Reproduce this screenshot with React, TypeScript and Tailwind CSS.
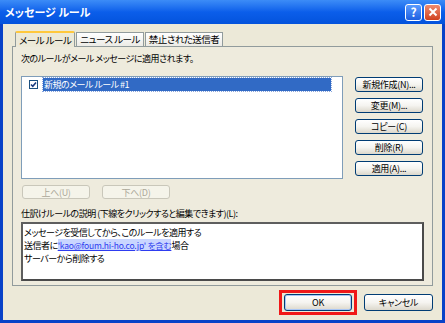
import React from 'react';

const jp = "font-['Noto_Sans_CJK_JP','Noto_Sans',sans-serif] [font-feature-settings:'palt']";

function XpButton({ label, disabled = false, className = '' }: { label: React.ReactNode; disabled?: boolean; className?: string }) {
  return (
    <div
      className={`flex items-center justify-center rounded-[3px] border text-[9px] leading-none tracking-[-0.3px] ${
        disabled
          ? 'border-[#C9C7BA] bg-[#F5F4EA] text-[#ACA899]'
          : 'border-[#003C74] bg-linear-to-b from-[#FFFFFF] via-[#F5F4F0] to-[#DCD8CC] text-black'
      } ${className}`}
    >
      {label}
    </div>
  );
}

function Tab({ label, active = false }: { label: string; active?: boolean }) {
  return active ? (
    <div className="relative z-10 -mb-px flex h-[16px] items-center rounded-t-[2px] border-x border-t-2 border-x-[#919B9C] border-t-[#FFC83C] bg-[#ECE9D8] px-[3px] text-[9.5px] tracking-[-0.5px]">
      {label}
    </div>
  ) : (
    <div className="mt-[2px] flex h-[14px] items-center border-x border-t border-[#919B9C] bg-linear-to-b from-[#FFFFFF] to-[#ECEBE6] px-[3px] text-[9.5px] tracking-[-0.5px]">
      {label}
    </div>
  );
}

function CheckBox() {
  return (
    <div className="flex h-[9px] w-[9px] items-center justify-center border border-[#1C5180] bg-white">
      <svg width="7" height="7" viewBox="0 0 7 7">
        <path d="M1 3.5 L2.8 5.3 L6 1.5" stroke="#1C3C80" strokeWidth="1.6" fill="none" />
      </svg>
    </div>
  );
}

export default function App() {
  const sideButtons = ['新規作成(N)...', '変更(M)...', 'コピー(C)', '削除(R)', '適用(A)...'];

  return (
    <div className={`flex h-[323px] w-[445px] flex-col overflow-hidden bg-[#0842C8] ${jp}`}>
      {/* title bar */}
      <div className="flex h-[24px] shrink-0 items-center justify-between bg-linear-to-b from-[#3C8CF7] via-[#0B5EEA] to-[#0453DC] pl-[5px] pr-[4px]">
        <span className="text-[11px] font-bold text-white">メッセージ ルール</span>
        <div className="flex gap-[2px]">
          <div className="flex h-[17px] w-[17px] items-center justify-center rounded-[3px] border border-white bg-linear-to-b from-[#5A9BFF] to-[#1E5FE0] text-[12px] font-bold leading-none text-white">
            ?
          </div>
          <div className="flex h-[17px] w-[17px] items-center justify-center rounded-[3px] border border-white bg-linear-to-b from-[#EE8A6E] to-[#D0401C]">
            <svg width="10" height="10" viewBox="0 0 10 10">
              <path d="M1.5 1.5 L8.5 8.5 M8.5 1.5 L1.5 8.5" stroke="white" strokeWidth="2" />
            </svg>
          </div>
        </div>
      </div>

      {/* body */}
      <div className="mx-[3px] mb-[3px] flex flex-1 flex-col bg-[#ECE9D8] px-[9px] pt-[6px] text-black">
        {/* tabs */}
        <div className="flex items-end gap-[1px] pl-[3px]">
          <Tab label="メール ルール" active />
          <Tab label="ニュース ルール" />
          <Tab label="禁止された送信者" />
        </div>

        {/* panel */}
        <div className="flex h-[240px] w-[421px] flex-col border border-[#919B9C] bg-[#EEEBDD] px-[8px] pt-[5px] text-[9px] tracking-[-0.5px]">
          <div className="h-[14px] leading-[14px]">次のルールがメール メッセージに適用されます。</div>

          <div className="mt-[10px] flex gap-[12px]">
            <div className="h-[103px] w-[322px] border border-[#7F9DB9] bg-white pl-[7px] pt-[1px]">
              <div className="flex h-[13px] items-center gap-[5px]">
                <CheckBox />
                <div className="flex h-[13px] w-[288px] items-center bg-[#316AC5] pl-[1px] text-white outline-1 outline-dotted outline-[#8CA8DD]">
                  新規のメール ルール #1
                </div>
              </div>
            </div>
            <div className="flex flex-col gap-[6px] pt-[1px]">
              {sideButtons.map((b) => (
                <XpButton key={b} label={b} className="h-[15px] w-[68px]" />
              ))}
            </div>
          </div>

          <div className="mt-[6px] flex gap-[12px] pl-[1px]">
            <XpButton label="上へ(U)" disabled className="h-[14px] w-[68px]" />
            <XpButton label="下へ(D)" disabled className="h-[14px] w-[68px]" />
          </div>

          <div className="mt-[8px] h-[13px] leading-[13px]">
            仕訳けルールの説明 (下線をクリックすると編集できます)(L):
          </div>

          <div className="mt-[2px] h-[59px] w-[403px] border-2 border-t-[#5E5E5E] border-l-[#5E5E5E] border-b-[#4A4A4A] border-r-[#4A4A4A] bg-white pl-[1px] pt-[2px] leading-[13px]">
            <div className="h-[13px]">メッセージを受信してから、このルールを適用する</div>
            <div className="h-[13px]">
              送信者に
              <span className="bg-[#C9D6FF] text-[8.5px] tracking-[-0.2px] text-[#2E3CF0] underline">'kao@foum.hi-ho.co.jp' を含む</span>
              場合
            </div>
            <div className="h-[13px]">サーバーから削除する</div>
          </div>
        </div>

        {/* dialog buttons */}
        <div className="mt-[4px] flex justify-end gap-[7px]">
          <div className="border-[3px] border-[#F01818] px-[2px] py-[1px]">
            <XpButton label="OK" className="h-[17px] w-[68px] border-[#2B54B8] shadow-[inset_0_0_0_1px_#A9C6F5]" />
          </div>
          <div className="pt-[4px]">
            <XpButton label="キャンセル" className="h-[17px] w-[69px]" />
          </div>
        </div>
      </div>
    </div>
  );
}
